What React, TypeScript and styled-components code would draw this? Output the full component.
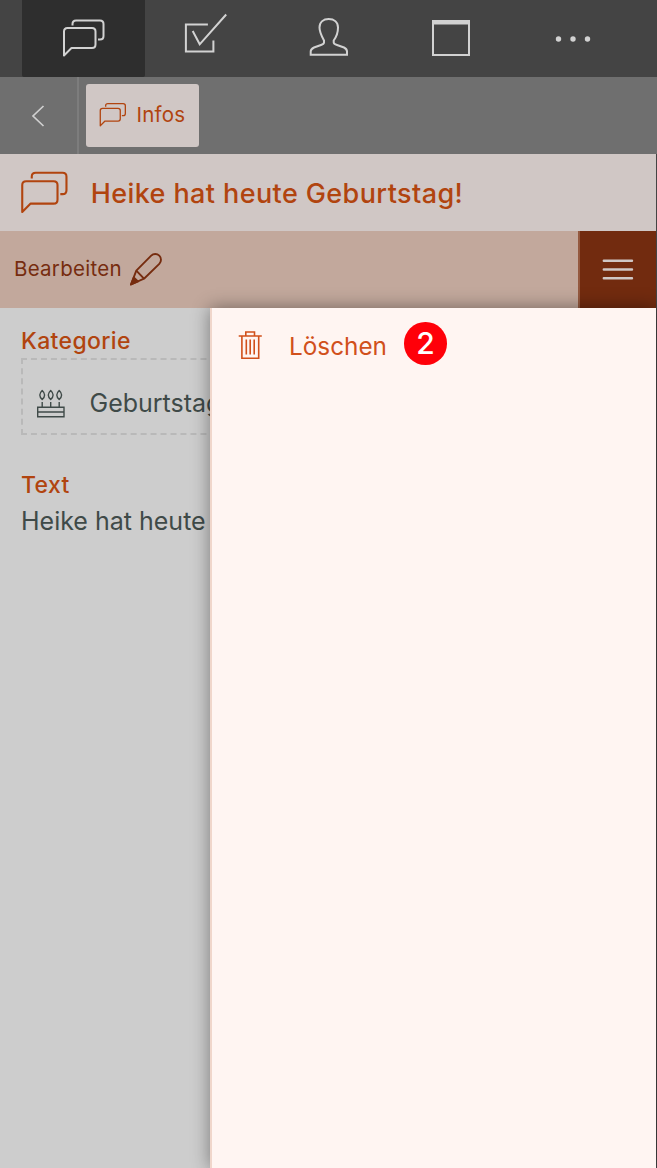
import React from "react";
import styled, { createGlobalStyle } from "styled-components";

const GlobalStyle = createGlobalStyle`
  * { box-sizing: border-box; }
  body { margin: 0; background: #cdcdcd; font-family: Inter, "Liberation Sans", sans-serif; }
  svg { display: block; flex: none; fill: none; stroke: currentColor; }
`;

const Screen = styled.div`
  width: 657px;
  height: 1168px;
  display: flex;
  flex-direction: column;
  overflow: hidden;
  background: #cdcdcd;
`;

const NavBar = styled.nav`
  flex: none;
  display: flex;
  height: 77px;
  padding-left: 22px;
  background: #444;
`;

const NavItem = styled.div<{ $active?: boolean; $lift?: number }>`
  flex: none;
  width: ${(p) => (p.$active ? 123 : 122.4)}px;
  height: 77px;
  display: flex;
  align-items: center;
  justify-content: center;
  padding-bottom: ${(p) => p.$lift ?? 0}px;
  border-radius: 0 0 2px 2px;
  color: #d2d2d2;
  background: ${(p) => (p.$active ? "#2e2e2e" : "transparent")};
`;

const CrumbBar = styled.div`
  flex: none;
  display: flex;
  align-items: center;
  height: 77px;
  background: #6f6f6f;
`;

const BackButton = styled.div`
  width: 79px;
  height: 77px;
  display: flex;
  align-items: center;
  padding-left: 31px;
  color: #d0d0d0;
  border-right: 2px solid #7d7d7d;
`;

const Crumb = styled.div`
  width: 113px;
  height: 63px;
  margin-left: 7px;
  padding: 0 0 2px 13px;
  display: flex;
  align-items: center;
  gap: 9.5px;
  border-radius: 3px;
  background: #d0c7c5;
  color: #b1440f;
  font-size: 20.5px;
  letter-spacing: 0.2px;
`;

const Framed = styled.div`
  flex: 1;
  min-height: 0;
  display: flex;
  flex-direction: column;
  border-right: 1px solid #444;
`;

const TitleBar = styled.header`
  flex: none;
  display: flex;
  align-items: center;
  height: 77px;
  padding-left: 20px;
  gap: 21.5px;
  background: #d0c7c5;
  color: #b1440f;
`;

const Title = styled.h1`
  margin: 0;
  padding-top: 2px;
  font-size: 27px;
  font-weight: 500;
  letter-spacing: 0.4px;
  white-space: nowrap;
`;

const ActionBar = styled.div`
  flex: none;
  display: flex;
  align-items: center;
  justify-content: space-between;
  height: 77px;
  background: #c2a89c;
`;

const EditAction = styled.div`
  display: flex;
  align-items: center;
  gap: 7.5px;
  padding: 0 0 1px 14px;
  color: #762c0f;
  font-size: 20.5px;
  letter-spacing: 0.26px;
`;

const EditText = styled.span`
  padding-bottom: 2px;
`;

const MenuButton = styled.div`
  width: 78px;
  height: 77px;
  display: flex;
  align-items: center;
  justify-content: center;
  border-left: 2px solid #94593f;
  background: #722b0f;
  color: #d0c7c5;
`;

const Body = styled.main`
  flex: 1;
  min-height: 0;
  display: flex;
`;

const Details = styled.section`
  flex: none;
  width: 210px;
  padding: 18px 0 0 21px;
  overflow: hidden;
  color: #3f4a48;
  font-size: 25px;
  white-space: nowrap;
`;

const Label = styled.h2`
  margin: 0;
  height: 32px;
  line-height: 30px;
  font-size: 23px;
  font-weight: 500;
  letter-spacing: 0.35px;
  color: #b1440f;
`;

const CategoryBox = styled.div`
  display: flex;
  align-items: center;
  width: 614px;
  height: 77px;
  padding: 13px 0 0 13px;
  margin-bottom: 35px;
  gap: 23.5px;
  border: 2px dashed #b9b9b9;
  line-height: 30px;
`;

const BodyText = styled.p`
  margin: 3px 0 0;
  line-height: 32px;
`;

const Drawer = styled.aside`
  flex: 1;
  border-left: 2px solid #f0d6cb;
  background: #fff5f2;
  box-shadow: 0 0 17px rgba(0, 0, 0, 0.42);
  position: relative;
`;

const DrawerItem = styled.div`
  display: flex;
  align-items: center;
  height: 75px;
  padding-left: 26px;
  color: #d1501b;
  font-size: 24.3px;
`;

const DrawerText = styled.span`
  padding: 1px 0 0 26px;
`;

const StepBadge = styled.span`
  width: 42.5px;
  height: 42.5px;
  margin: 0 0 4.5px 17.4px;
  display: flex;
  align-items: center;
  justify-content: center;
  border-radius: 50%;
  background: #ff0009;
  color: #fff;
  font-size: 30px;
  font-weight: 550;
`;

const ChatIcon = ({ scale = 1, stroke = 2 }: { scale?: number; stroke?: number }) => (
  <svg width={44 * scale} height={40 * scale} viewBox="0 0 44 40" strokeWidth={stroke / scale} strokeLinejoin="round">
    <path d="M2 37.500V13.500Q2 10 5.500 10H30Q33.500 10 33.500 13.500V26.500Q33.500 30 30 30H9.500Z" />
    <path d="M10.500 7.500V6Q10.500 2.500 14 2.500H38Q41.500 2.500 41.500 6V18Q41.500 21.500 38 21.500H36" />
  </svg>
);

const CheckIcon = () => (
  <svg width="44" height="44" viewBox="0.600 0 44 44" strokeWidth="2">
    <path d="M24.500 12.500H2.500V39.500H30V28.500" />
    <path d="M9.300 19L16.300 32.300L42.800 2.500" />
  </svg>
);

const PersonIcon = () => (
  <svg width="40" height="40" viewBox="0 0 40 40" strokeWidth="2">
    <path d="M1.700 37.700V34.500C1.700 32.500 3 31.500 5 30.500L12 28Q15 27 15 25.500V23.500C12.500 19 10.500 15 10.500 10.500C10.500 5 14.500 2 19.700 2C25 2 29 5 29 10.500C29 15 28 19 24.700 23.500V25.500Q24.700 27 28 28L35 30.500C37 31.500 38 32.500 38 34.500V37.700Z" />
  </svg>
);

const WindowIcon = () => (
  <svg width="38" height="36" viewBox="0 0 38 36" strokeWidth="2">
    <path d="M1 1H37V35H1Z" />
    <path d="M0 2.500H38" strokeWidth="4" />
  </svg>
);

const MoreIcon = () => (
  <svg width="36" height="8" viewBox="0 0 36 8">
    <g fill="currentColor" stroke="none">
      <circle cx="3.500" cy="4" r="2.700" />
      <circle cx="18" cy="4" r="2.700" />
      <circle cx="32.500" cy="4" r="2.700" />
    </g>
  </svg>
);

const BackIcon = () => (
  <svg width="14" height="22" viewBox="0 0 14 22" strokeWidth="1.700">
    <path d="M12.500 1L2 11L12.500 21" />
  </svg>
);

const PencilIcon = () => (
  <svg width="34" height="34" viewBox="0 0 34 34" strokeWidth="1.900" strokeLinejoin="round">
    <path d="M2 32.500L7.300 18.700L22.200 3.700A5.600 5.600 0 0 1 30.300 11.800L15 26.700Z" />
    <path d="M7.300 18.700L15 26.700" />
    <path d="M2 32.500L4.700 25.500L9 29.500Z" fill="currentColor" />
  </svg>
);

const MenuIcon = () => (
  <svg width="32" height="22" viewBox="0 0 32 22" strokeWidth="2.400" strokeLinecap="round">
    <path d="M1.800 1.700H30M1.800 10.500H30M1.800 19.200H30" />
  </svg>
);

const CakeIcon = () => (
  <svg width="30" height="30" viewBox="0 0 30 30" strokeWidth="1.400">
    <path d="M1.700 19.300H28V28.700H1.700ZM1.700 24H28M6.200 14V19M14.700 14V19M23.200 14V19" />
    <path d="M6.200 2.500Q1.400 7 6.200 11.500Q11 7 6.200 2.500ZM14.700 2.500Q9.900 7 14.700 11.500Q19.500 7 14.700 2.500ZM23.200 2.500Q18.400 7 23.200 11.500Q28 7 23.200 2.500Z" strokeLinejoin="round" />
  </svg>
);

const TrashIcon = () => (
  <svg width="25" height="32" viewBox="0 0 25 32" strokeWidth="1.600">
    <path d="M0.700 6H23.800M3.900 6V28.300H20.700V6M7.800 6V2H16.500V6M8.300 9.500V24.500M12.200 9.500V24.500M16.200 9.500V24.500" />
  </svg>
);

export default function App() {
  return (
    <Screen>
      <GlobalStyle />
      <NavBar>
        <NavItem $active $lift={1}><ChatIcon /></NavItem>
        <NavItem $lift={9}><CheckIcon /></NavItem>
        <NavItem $lift={3}><PersonIcon /></NavItem>
        <NavItem $lift={1}><WindowIcon /></NavItem>
        <NavItem><MoreIcon /></NavItem>
      </NavBar>
      <CrumbBar>
        <BackButton><BackIcon /></BackButton>
        <Crumb><ChatIcon scale={0.635} stroke={1.3} />Infos</Crumb>
      </CrumbBar>
      <Framed>
        <TitleBar>
          <ChatIcon scale={1.12} stroke={2.1} />
          <Title>Heike hat heute Geburtstag!</Title>
        </TitleBar>
        <ActionBar>
          <EditAction><EditText>Bearbeiten</EditText><PencilIcon /></EditAction>
          <MenuButton><MenuIcon /></MenuButton>
        </ActionBar>
        <Body>
          <Details>
            <Label>Kategorie</Label>
            <CategoryBox><CakeIcon />Geburtstag</CategoryBox>
            <Label>Text</Label>
            <BodyText>Heike hat heute Geburtstag!</BodyText>
          </Details>
          <Drawer>
            <DrawerItem>
              <TrashIcon />
              <DrawerText>Löschen</DrawerText>
              <StepBadge>2</StepBadge>
            </DrawerItem>
          </Drawer>
        </Body>
      </Framed>
    </Screen>
  );
}
